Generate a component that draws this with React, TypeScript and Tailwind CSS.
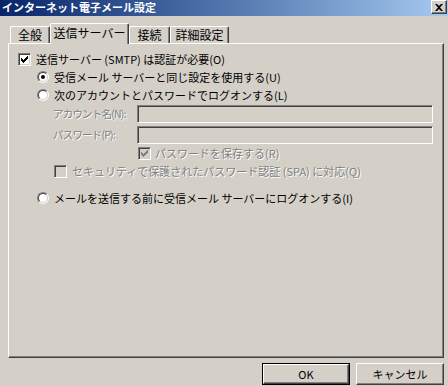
import React from "react";

const raised =
  "border border-t-white border-l-white border-r-[#404040] border-b-[#404040] shadow-[inset_-1px_-1px_0_#808080]";
const sunken =
  "border border-t-[#808080] border-l-[#808080] border-r-white border-b-white shadow-[inset_1px_1px_0_#404040,inset_-1px_-1px_0_#d4d0c8]";
const grayText = "whitespace-nowrap text-[#808080] [text-shadow:1px_1px_0_#fff]";

function CheckBox({ checked, disabled }: { checked?: boolean; disabled?: boolean }) {
  return (
    <span
      className={`flex h-[13px] w-[13px] shrink-0 items-center justify-center ${sunken} ${
        disabled ? "bg-[#d4d0c8]" : "bg-white"
      }`}
    >
      {checked && (
        <svg width="7" height="7" viewBox="0 0 7 7">
          <path
            d="M0 2h1v1h1v1h1v-1h1v-1h1v-1h1v-1h1v3h-1v1h-1v1h-1v1h-1v1h-1v-1h-1v-1h-1z"
            fill={disabled ? "#808080" : "#000"}
          />
        </svg>
      )}
    </span>
  );
}

function Radio({ checked }: { checked?: boolean }) {
  return (
    <span className="flex h-[12px] w-[12px] shrink-0 rounded-full border border-t-[#808080] border-l-[#808080] border-r-white border-b-white">
      <span className="flex flex-1 items-center justify-center rounded-full border border-t-[#404040] border-l-[#404040] border-r-[#d4d0c8] border-b-[#d4d0c8] bg-white">
        {checked && <span className="h-[4px] w-[4px] rounded-full bg-black" />}
      </span>
    </span>
  );
}

function Tab({ label, active, width }: { label: string; active?: boolean; width: string }) {
  return (
    <div
      className={`flex items-center justify-center whitespace-nowrap rounded-t-[2px] border-l border-t border-r border-l-white border-t-white border-r-[#404040] bg-[#d4d0c8] text-[12px] shadow-[inset_-1px_0_0_#808080] ${width} ${
        active ? "relative z-10 -mb-px h-[21px] pb-[2px]" : "h-[17px]"
      }`}
    >
      {label}
    </div>
  );
}

export default function App() {
  return (
    <div
      className="flex h-[386px] w-[448px] flex-col overflow-hidden bg-[#d4d0c8] text-[11px] leading-none text-black"
      style={{ fontFamily: '"MS UI Gothic", "Noto Sans CJK JP", sans-serif' }}
    >
      {/* title bar */}
      <div className="flex h-[16px] shrink-0 items-start justify-between bg-gradient-to-r from-[#0a246a] to-[#a6caf0] pl-[2px] pr-px">
        <span className="mt-[2px] whitespace-nowrap font-bold text-white">インターネット電子メール設定</span>
        <span className={`flex h-[14px] w-[16px] items-center justify-center bg-[#d4d0c8] ${raised}`}>
          <svg width="8" height="7" viewBox="0 0 8 7">
            <path d="M0 0h2l2 2 2-2h2L5 3.5 8 7H6L4 5 2 7H0l3-3.5z" fill="#000" />
          </svg>
        </span>
      </div>

      {/* tabs */}
      <div className="mt-[7px] flex items-end pl-[10px]">
        <Tab label="全般" width="w-[40px]" />
        <Tab label="送信サーバー" width="w-[79px]" active />
        <Tab label="接続" width="w-[41px]" />
        <Tab label="詳細設定" width="w-[59px]" />
      </div>

      {/* panel */}
      <div className="ml-[8px] flex h-[315px] w-[436px] flex-col border border-t-white border-l-white border-r-[#404040] border-b-[#404040] pl-[9px] pt-[6px] shadow-[inset_-1px_-1px_0_#808080]">
        <div className="flex h-[18px] items-center gap-[5px] whitespace-nowrap">
          <CheckBox checked />
          <span>送信サーバー (SMTP) は認証が必要(O)</span>
        </div>
        <div className="flex h-[18px] items-center gap-[5px] whitespace-nowrap pl-[19px]">
          <Radio checked />
          <span>受信メール サーバーと同じ設定を使用する(U)</span>
        </div>
        <div className="flex h-[18px] items-center gap-[5px] whitespace-nowrap pl-[19px]">
          <Radio />
          <span>次のアカウントとパスワードでログオンする(L)</span>
        </div>
        <div className="mt-px flex h-[18px] items-center pl-[35px]">
          <span className={`w-[84px] shrink-0 text-[10.5px] tracking-[-0.8px] ${grayText}`}>アカウント名(N):</span>
          <span className={`h-[18px] w-[296px] shrink-0 ${sunken}`} />
        </div>
        <div className="mt-[3px] flex h-[18px] items-center pl-[35px]">
          <span className={`w-[84px] shrink-0 text-[10.5px] tracking-[-0.8px] ${grayText}`}>パスワード(P):</span>
          <span className={`h-[18px] w-[296px] shrink-0 ${sunken}`} />
        </div>
        <div className="flex h-[18px] items-center gap-[4px] pl-[120px]">
          <CheckBox checked disabled />
          <span className={grayText}>パスワードを保存する(R)</span>
        </div>
        <div className="flex h-[18px] items-center gap-[5px] pl-[36px]">
          <CheckBox disabled />
          <span className={grayText}>セキュリティで保護されたパスワード認証 (SPA) に対応(Q)</span>
        </div>
        <div className="mt-[9px] flex h-[18px] items-center gap-[5px] whitespace-nowrap pl-[19px]">
          <Radio />
          <span>メールを送信する前に受信メール サーバーにログオンする(I)</span>
        </div>
      </div>

      {/* buttons */}
      <div className="mt-[5px] flex justify-end gap-[6px] pr-[4px]">
        <div className="h-[22px] w-[88px] border border-black">
          <div className={`flex h-full w-full items-center justify-center ${raised}`}>OK</div>
        </div>
        <div className={`flex h-[22px] w-[88px] items-center justify-center ${raised}`}>キャンセル</div>
      </div>
    </div>
  );
}
